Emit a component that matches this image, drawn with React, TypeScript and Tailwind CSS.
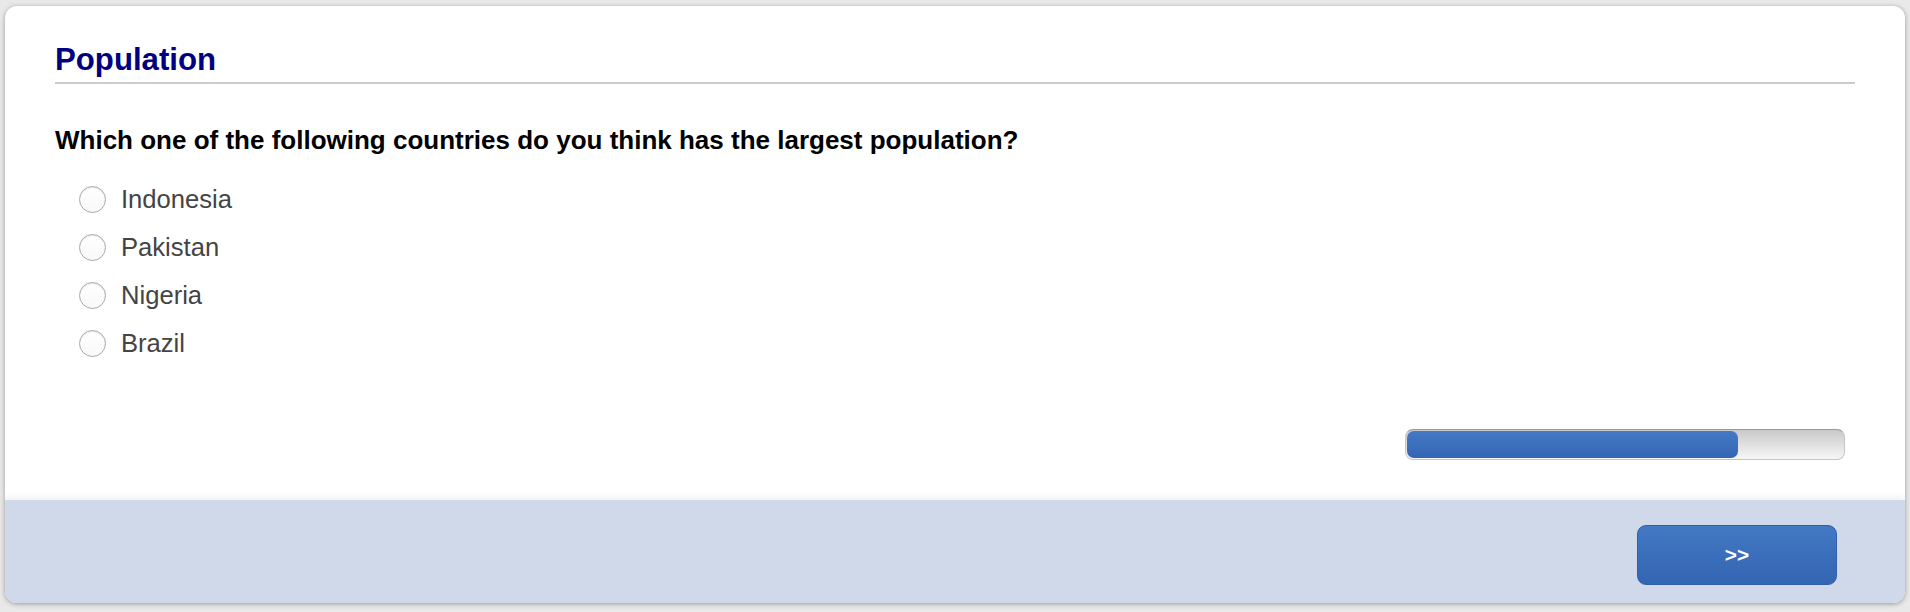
import React from 'react';

const options = ['Indonesia', 'Pakistan', 'Nigeria', 'Brazil'];

function Radio() {
  return (
    <span className="w-[27px] h-[27px] rounded-full border border-[#a9a9a9] bg-gradient-to-b from-white to-[#f8f8f8] shadow-[inset_0_1px_1px_rgba(0,0,0,0.1)] shrink-0" />
  );
}

export default function App() {
  const progress = 76;

  return (
    <div className="min-h-[612px] bg-[#e9e9e9] pt-[6px] px-[5px] pb-[10px] font-['Liberation_Sans',Arial,sans-serif]">
      <div className="bg-white rounded-[12px] overflow-hidden shadow-[0_1px_5px_rgba(0,0,0,0.35)]">
        <div className="px-[50px] pt-[35px] pb-[40px]">
          <h1 className="text-[31.2px] leading-[1.2] font-bold text-[#000080] pb-[4px] border-b-2 border-[#cccccc]">
            Population
          </h1>

          <p className="mt-[41px] text-[26px] leading-[1.2] font-bold text-black">
            Which one of the following countries do you think has the largest population?
          </p>

          <ul className="mt-[19px] pl-[24px]">
            {options.map((item) => (
              <li key={item} className="h-[48px] flex items-center">
                <Radio />
                <span className="ml-[15px] text-[25.6px] leading-[1.2] text-[#444444]">{item}</span>
              </li>
            ))}
          </ul>

          <div className="mt-[61px] flex justify-end pr-[10px]">
            <div className="w-[440px] h-[31px] rounded-[8px] border border-[#c4c4c4] border-t-[#9a9a9a] bg-gradient-to-b from-[#c9c9c9] to-[#f7f7f7] p-px">
              <div
                className="h-full rounded-[7px] bg-gradient-to-b from-[#4479c5] to-[#3465b3]"
                style={{ width: `${progress}%` }}
              />
            </div>
          </div>
        </div>

        <div className="h-[103px] bg-[#cfd9ea] shadow-[0_-3px_6px_rgba(0,0,0,0.06)] flex justify-end items-start pt-[25px] pr-[68px]">
          <button className="w-[200px] h-[60px] rounded-[9px] border border-[#3060aa] bg-gradient-to-b from-[#4379c4] to-[#3465b2] text-white text-[20.8px] font-bold flex items-center justify-center">
            &gt;&gt;
          </button>
        </div>
      </div>
    </div>
  );
}
